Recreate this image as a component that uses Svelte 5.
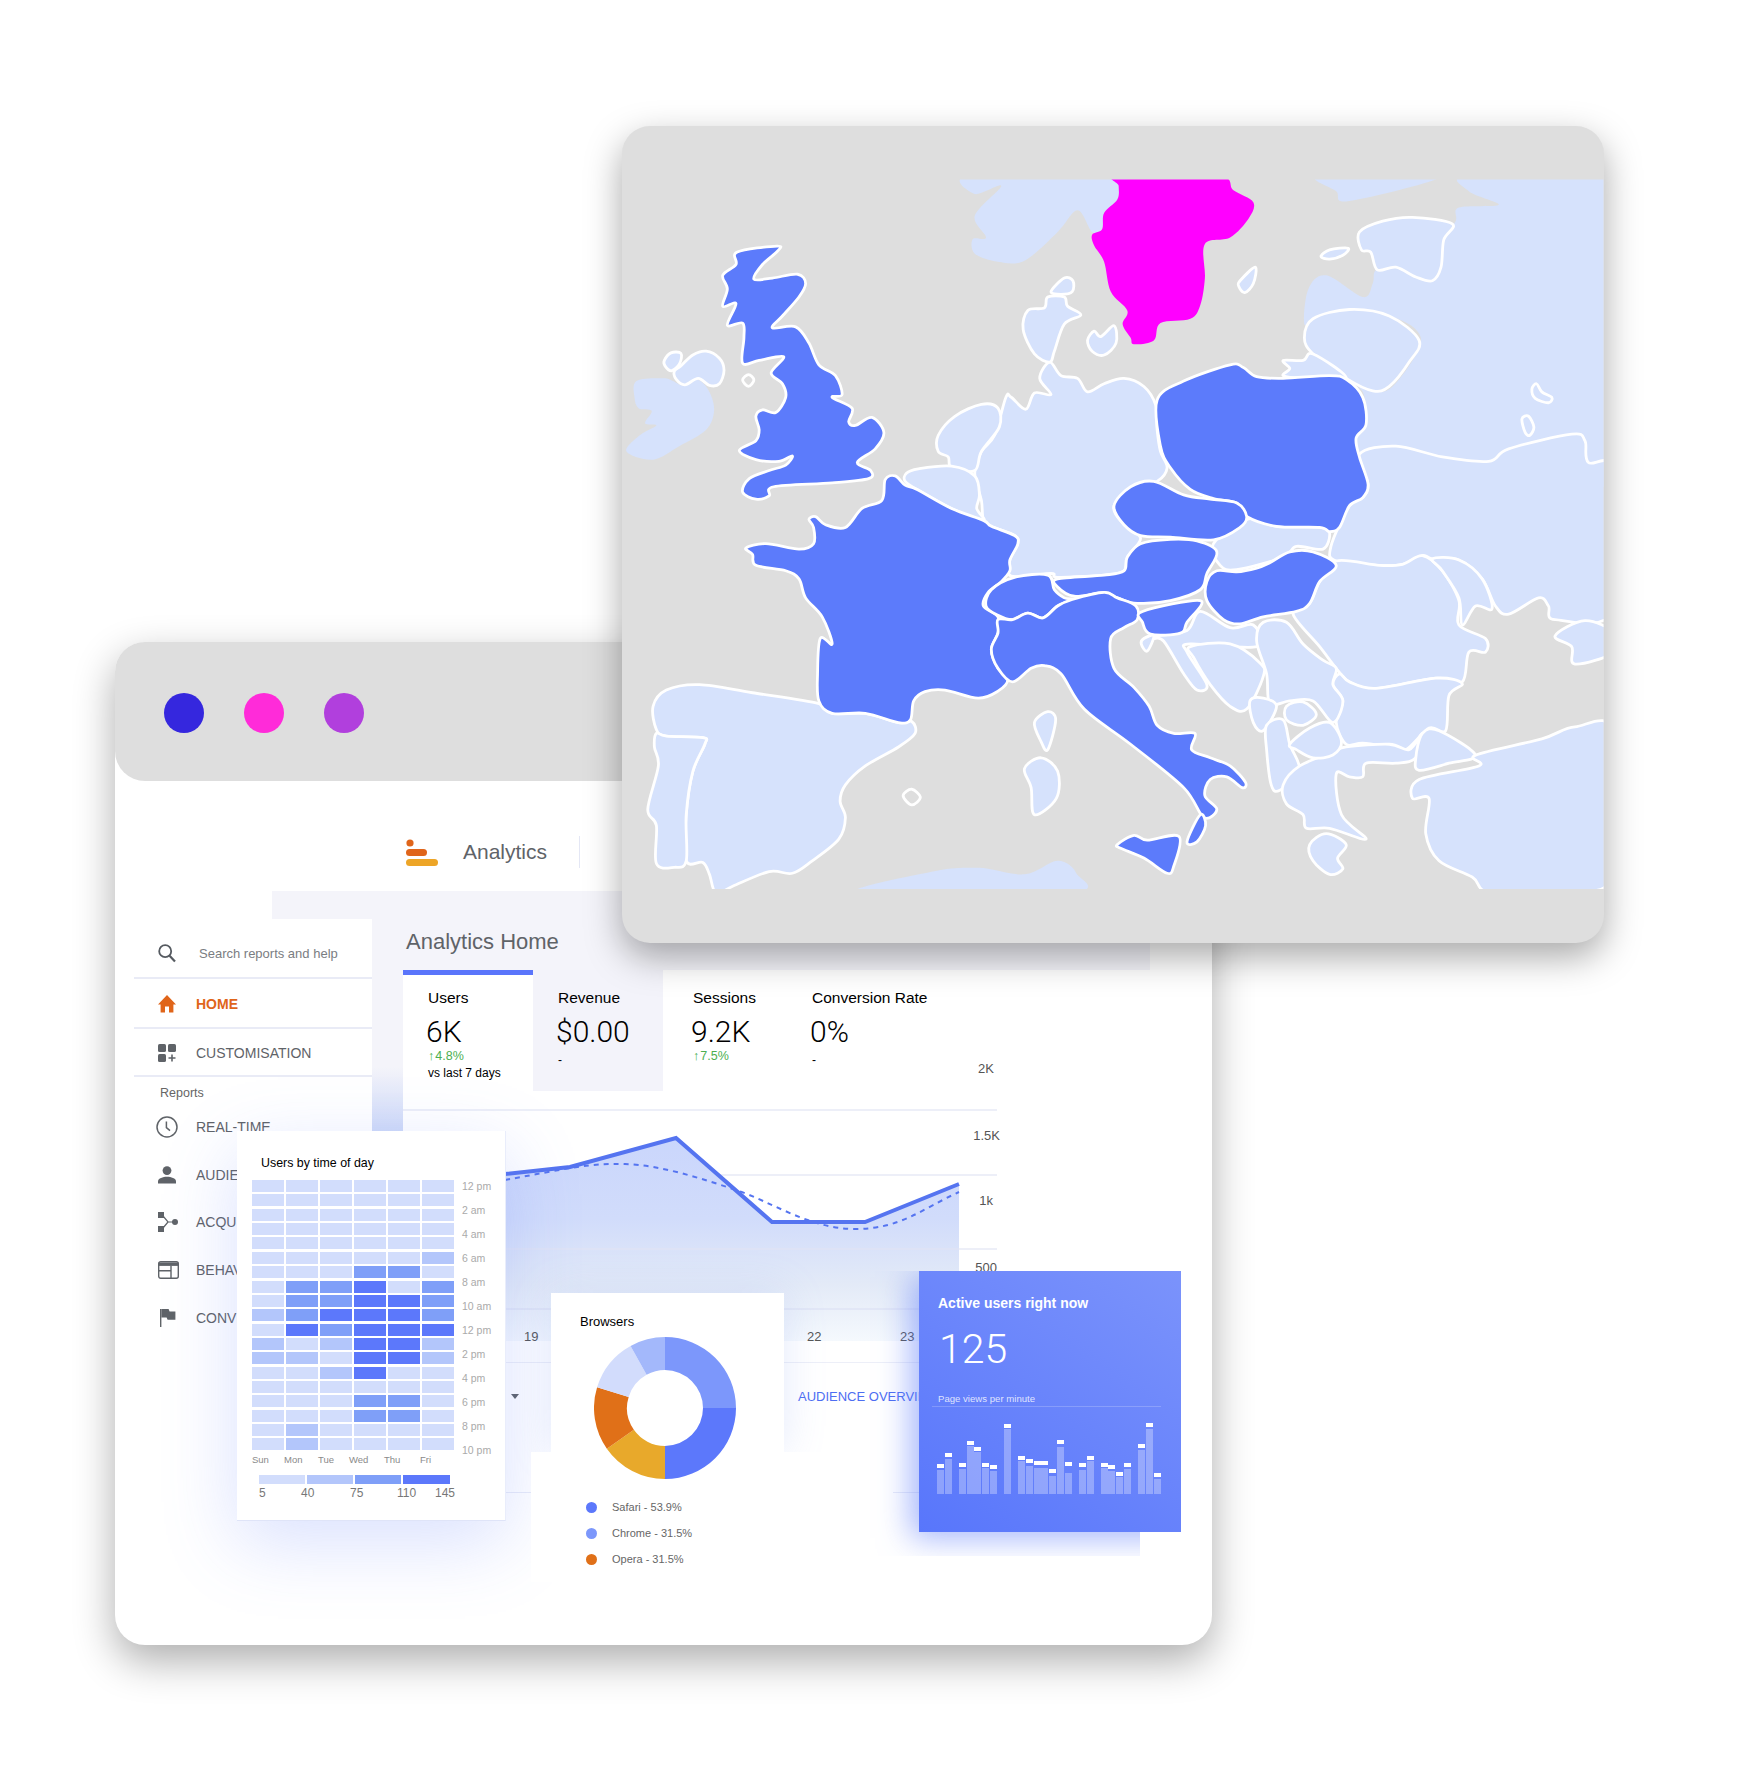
<script>
  // map traced on a 1568 square, squeezed to the 1040x850 box
  const LIGHT = "#d6e2fc";
  const BLUE = "#5c7bfb";

  const shapes = [
    // no outline
    { f: LIGHT, s: 0, p: [[55,500],[95,495],[110,500],[125,508],[148,498],[165,520],[172,555],[160,590],[120,620],[80,645],[40,630],[60,600],[85,582],[68,578],[78,555],[58,550],[52,530]] },
    { f: LIGHT, s: 0, p: [[558,120],[780,120],[782,140],[780,165],[760,190],[757,220],[742,225],[720,185],[690,225],[640,278],[600,280],[565,265],[562,238],[582,235],[565,195],[605,140],[565,155]] },
    { f: LIGHT, s: 0, p: [[1085,120],[1270,120],[1130,168],[1110,150]] },
    { f: LIGHT, s: 0, p: [[1310,120],[1530,120],[1530,660],[1490,650],[1485,610],[1465,598],[1370,625],[1340,648],[1270,640],[1200,620],[1145,635],[1140,600],[1155,570],[1150,520],[1125,495],[1165,518],[1195,510],[1235,440],[1230,405],[1190,380],[1130,368],[1080,380],[1062,395],[1068,330],[1095,305],[1150,345],[1165,320],[1170,295],[1200,290],[1230,308],[1255,315],[1268,290],[1272,240],[1290,205],[1295,180],[1355,175],[1310,150]] },
    { f: LIGHT, s: 0, p: [[390,1445],[500,1405],[570,1398],[640,1410],[690,1385],[718,1408],[708,1445]] },
    { f: "#ff00ff", s: 0, p: [[780,120],[930,120],[955,148],[985,170],[978,200],[950,235],[912,247],[912,310],[905,360],[890,385],[845,393],[835,425],[805,432],[800,420],[788,395],[795,370],[770,335],[760,280],[745,250],[742,230],[757,220],[760,190],[780,165],[782,140]] },
    // light countries
    { f: LIGHT, p: [[97,462],[107,448],[122,449],[120,468],[108,481],[98,472]] },
    { f: LIGHT, p: [[122,472],[140,452],[160,445],[180,458],[187,480],[180,505],[165,508],[148,495],[128,507],[115,497],[112,482]] },
    { f: "none", p: [[215,498],[224,488],[232,498],[224,510]] },
    { f: LIGHT, p: [[85,1143],[80,1100],[100,1070],[150,1060],[230,1075],[330,1095],[350,1113],[400,1113],[450,1130],[470,1128],[475,1150],[450,1175],[400,1210],[370,1245],[362,1275],[370,1305],[360,1345],[320,1385],[290,1408],[255,1405],[200,1432],[175,1445],[165,1410],[155,1388],[130,1385],[130,1300],[140,1220],[158,1170],[155,1158],[100,1155]] },
    { f: LIGHT, p: [[85,1150],[100,1155],[155,1158],[158,1170],[140,1220],[130,1300],[130,1385],[112,1397],[85,1390],[85,1320],[72,1290],[88,1210],[82,1175]] },
    { f: LIGHT, p: [[578,755],[575,720],[565,670],[575,630],[595,600],[612,530],[620,530],[642,552],[655,522],[680,525],[663,495],[678,465],[695,490],[720,495],[735,520],[760,505],[790,495],[820,510],[838,545],[840,590],[845,630],[855,660],[840,685],[810,695],[775,730],[790,765],[815,790],[795,825],[790,850],[760,858],[690,862],[680,855],[620,860],[618,830],[630,800],[625,785],[590,768]] },
    { f: LIGHT, p: [[678,465],[655,450],[638,405],[645,370],[670,365],[675,345],[700,345],[705,362],[725,378],[700,395],[685,445]] },
    { f: LIGHT, p: [[680,335],[700,310],[713,315],[712,335],[695,340]] },
    { f: LIGHT, p: [[525,640],[510,630],[510,600],[535,565],[575,543],[600,550],[602,585],[575,630],[565,665],[530,660]] },
    { f: LIGHT, p: [[462,670],[480,662],[530,657],[565,675],[572,710],[568,735],[578,757],[530,735],[478,700],[460,685]] },
    { f: LIGHT, p: [[965,315],[988,290],[985,320],[972,337],[963,325]] },
    { f: LIGHT, p: [[735,425],[745,408],[755,418],[775,398],[778,430],[760,452],[742,445]] },
    { f: LIGHT, p: [[1087,270],[1100,258],[1128,255],[1120,268],[1100,275]] },
    { f: LIGHT, p: [[1145,225],[1180,205],[1225,198],[1285,210],[1272,240],[1268,290],[1255,315],[1230,308],[1200,290],[1172,295],[1162,262],[1148,258]] },
    { f: LIGHT, p: [[1062,420],[1075,385],[1130,368],[1190,380],[1235,425],[1220,465],[1190,510],[1165,518],[1125,495],[1075,450]] },
    { f: LIGHT, p: [[1030,462],[1060,462],[1075,450],[1125,495],[1060,495],[1030,490],[1040,477]] },
    { f: LIGHT, p: [[1405,515],[1412,505],[1420,520],[1435,530],[1430,540],[1410,532]] },
    { f: LIGHT, p: [[1390,570],[1400,565],[1408,585],[1402,600],[1395,595]] },
    { f: LIGHT, p: [[1145,635],[1200,620],[1270,640],[1340,648],[1370,625],[1465,598],[1485,610],[1490,650],[1530,670],[1530,920],[1440,940],[1430,915],[1415,900],[1370,930],[1350,915],[1330,865],[1295,830],[1255,828],[1240,822],[1210,838],[1175,840],[1110,832],[1102,805],[1130,730],[1150,715],[1158,690]] },
    { f: LIGHT, p: [[925,800],[975,755],[1020,768],[1085,770],[1100,780],[1090,810],[1050,805],[1030,825],[960,848],[935,840]] },
    { f: LIGHT, p: [[1110,832],[1175,840],[1210,838],[1240,822],[1270,850],[1295,905],[1295,950],[1335,975],[1335,1000],[1310,1000],[1300,1055],[1260,1048],[1170,1067],[1130,1055],[1110,1030],[1085,990],[1045,930],[1070,910],[1085,870]] },
    { f: LIGHT, p: [[1255,828],[1295,830],[1330,865],[1345,920],[1320,915],[1300,950],[1295,900],[1270,850]] },
    { f: LIGHT, p: [[1115,1040],[1130,1055],[1170,1067],[1260,1048],[1300,1058],[1280,1080],[1275,1145],[1250,1140],[1215,1180],[1190,1175],[1150,1168],[1125,1170],[1110,1130],[1120,1090],[1105,1060]] },
    { f: LIGHT, p: [[835,975],[850,980],[880,1040],[900,1070],[915,1060],[885,1000],[890,985],[990,990],[985,950],[950,955],[905,925],[885,960],[840,970]] },
    { f: LIGHT, p: [[820,975],[835,970],[825,998],[816,985]] },
    { f: LIGHT, p: [[895,1010],[890,990],[950,985],[995,1020],[1000,1045],[975,1105],[950,1100],[920,1060]] },
    { f: LIGHT, p: [[1000,945],[1035,945],[1060,985],[1090,1015],[1110,1030],[1105,1060],[1120,1090],[1105,1130],[1075,1090],[1040,1090],[1010,1095],[1005,1040],[990,980]] },
    { f: LIGHT, p: [[980,1090],[1000,1085],[1020,1100],[1000,1145],[985,1130]] },
    { f: LIGHT, p: [[1035,1100],[1060,1092],[1080,1115],[1060,1135],[1035,1125]] },
    { f: LIGHT, p: [[1005,1135],[1030,1125],[1040,1170],[1055,1220],[1025,1255],[1012,1245],[1005,1180]] },
    { f: LIGHT, p: [[1055,1210],[1105,1185],[1125,1175],[1190,1170],[1220,1180],[1240,1150],[1230,1195],[1200,1205],[1155,1205],[1150,1230],[1130,1230],[1110,1225],[1118,1300],[1155,1345],[1100,1325],[1065,1325],[1060,1300],[1035,1280],[1030,1245]] },
    { f: LIGHT, p: [[1040,1170],[1070,1140],[1100,1130],[1118,1165],[1105,1190],[1075,1195],[1050,1180]] },
    { f: LIGHT, p: [[1070,1355],[1095,1335],[1125,1355],[1112,1380],[1120,1400],[1100,1410],[1075,1385]] },
    { f: LIGHT, p: [[1240,1150],[1265,1145],[1320,1190],[1280,1205],[1235,1218],[1230,1195]] },
    { f: LIGHT, p: [[1320,1190],[1420,1160],[1470,1138],[1530,1150],[1530,1400],[1470,1445],[1345,1445],[1315,1415],[1265,1385],[1245,1335],[1250,1270],[1225,1270],[1235,1235],[1325,1210]] },
    { f: LIGHT, p: [[1440,970],[1485,942],[1530,965],[1530,1000],[1470,1022],[1465,990]] },
    { f: LIGHT, p: [[655,1130],[675,1110],[687,1125],[675,1180],[665,1165]] },
    { f: LIGHT, p: [[640,1215],[665,1195],[690,1220],[688,1270],[655,1300],[650,1250]] },
    { f: "none", p: [[457,1265],[470,1253],[483,1268],[470,1282]] },
    // highlighted countries
    { f: BLUE, p: [[207,262],[267,251],[268,260],[245,285],[232,312],[260,310],[298,303],[310,320],[300,345],[275,380],[260,402],[295,400],[315,430],[330,470],[355,490],[365,525],[350,530],[380,550],[375,575],[385,582],[410,567],[428,595],[415,625],[388,650],[408,665],[405,680],[350,688],[262,695],[255,712],[235,718],[215,705],[225,680],[255,665],[280,655],[290,638],[270,648],[235,645],[210,628],[235,610],[240,590],[235,565],[245,553],[265,558],[280,530],[275,505],[258,485],[277,455],[240,462],[215,467],[217,420],[215,393],[192,397],[205,357],[185,362],[192,330],[185,305],[205,285]] },
    { f: BLUE, p: [[425,720],[430,682],[445,675],[460,692],[478,700],[530,735],[578,757],[590,768],[625,785],[630,800],[618,830],[618,850],[605,870],[585,890],[578,915],[600,935],[600,965],[590,995],[600,1030],[615,1050],[600,1072],[570,1085],[520,1070],[490,1073],[473,1090],[468,1125],[450,1130],[400,1113],[350,1113],[330,1090],[328,1040],[332,975],[350,985],[335,935],[310,900],[300,865],[280,850],[235,840],[230,820],[220,808],[250,800],[300,810],[322,800],[322,770],[315,755],[325,750],[340,765],[370,770],[395,735]] },
    { f: BLUE, p: [[840,535],[880,500],[950,470],[970,475],[990,492],[1030,495],[1100,490],[1125,497],[1150,530],[1155,580],[1140,605],[1145,640],[1158,690],[1150,715],[1130,730],[1115,770],[1100,778],[1085,770],[1020,768],[975,750],[960,725],[925,717],[890,700],[860,660],[845,620]] },
    { f: BLUE, p: [[775,730],[800,695],[835,685],[880,710],[920,718],[960,725],[975,750],[965,770],[925,793],[860,788],[815,785],[790,765]] },
    { f: BLUE, p: [[690,865],[760,858],[790,850],[795,825],[815,800],[860,792],[900,795],[930,815],[915,855],[905,885],[860,905],[810,910],[780,900],[760,890],[715,897],[690,880]] },
    { f: BLUE, p: [[582,915],[590,885],[625,862],[675,858],[685,885],[700,900],[712,903],[690,915],[668,937],[645,928],[622,940],[600,932]] },
    { f: BLUE, p: [[600,940],[622,940],[645,928],[668,937],[690,915],[712,903],[760,890],[780,900],[808,915],[810,940],[790,955],[770,975],[775,1030],[805,1065],[828,1100],[840,1135],[865,1150],[897,1150],[892,1180],[920,1195],[950,1210],[973,1240],[968,1250],[945,1230],[920,1235],[912,1265],[930,1290],[910,1305],[880,1250],[800,1170],[730,1105],[695,1040],[670,1025],[650,1030],[622,1055],[600,1030],[590,995],[600,965]] },
    { f: BLUE, p: [[780,1355],[805,1338],[825,1347],[873,1340],[865,1395],[855,1408],[820,1380],[785,1362]] },
    { f: BLUE, p: [[905,1300],[913,1320],[900,1350],[885,1350]] },
    { f: BLUE, p: [[915,870],[930,850],[960,852],[990,845],[1010,835],[1040,815],[1075,815],[1110,840],[1085,870],[1070,910],[1050,925],[1000,935],[965,948],[940,940],[915,905]] },
    { f: BLUE, p: [[818,925],[905,905],[885,945],[875,965],[830,967],[818,945]] },
  ];

  // closed catmull-rom through the traced points
  function smooth(p) {
    const n = p.length;
    let d = `M${p[0][0]} ${p[0][1]}`;
    for (let i = 0; i < n; i++) {
      const a = p[(i - 1 + n) % n], b = p[i], c = p[(i + 1) % n], e = p[(i + 2) % n];
      const c1x = b[0] + (c[0] - a[0]) / 6, c1y = b[1] + (c[1] - a[1]) / 6;
      const c2x = c[0] - (e[0] - b[0]) / 6, c2y = c[1] - (e[1] - b[1]) / 6;
      d += `C${c1x.toFixed(1)} ${c1y.toFixed(1)} ${c2x.toFixed(1)} ${c2y.toFixed(1)} ${c[0]} ${c[1]}`;
    }
    return d + "Z";
  }

  const tabs = [
    { label: "Users", value: "6K", delta: "4.8%", note: "vs last 7 days", cls: "active" },
    { label: "Revenue", value: "$0.00", dash: true, cls: "shaded" },
    { label: "Sessions", value: "9.2K", delta: "7.5%", cls: "plain" },
    { label: "Conversion Rate", value: "0%", dash: true, cls: "plain" },
  ];

  const heat = [
    "000000", "000000", "000000", "000000", "000000",
    "000001", "000220", "022302", "022332", "123332",
    "032333", "101331", "110331", "001300", "000000",
    "000220", "000220", "010000", "010000",
  ];
  const hours = ["12 pm", "2 am", "4 am", "6 am", "8 am", "10 am", "12 pm", "2 pm", "4 pm", "6 pm", "8 pm", "10 pm"];
  const days = ["Sun", "Mon", "Tue", "Wed", "Thu", "Fri"];
  const scale = ["5", "40", "75", "110", "145"];

  const segments = [
    { from: 0, to: 90, color: "#7c97fb" },
    { from: 90, to: 180, color: "#5c78fb" },
    { from: 180, to: 235, color: "#e8a92b" },
    { from: 235, to: 287, color: "#e07018" },
    { from: 287, to: 331, color: "#d2dcfc" },
    { from: 331, to: 360, color: "#a3b8fb" },
  ];

  function slice(from, to) {
    const pt = (deg, r) => {
      const a = (deg * Math.PI) / 180;
      return `${(71 + r * Math.sin(a)).toFixed(2)} ${(71 - r * Math.cos(a)).toFixed(2)}`;
    };
    const big = to - from > 180 ? 1 : 0;
    return `M${pt(from, 71)}A71 71 0 ${big} 1 ${pt(to, 71)}L${pt(to, 38)}A38 38 0 ${big} 0 ${pt(from, 38)}Z`;
  }

  const browsers = [
    { name: "Safari - 53.9%", color: "#5c78fb" },
    { name: "Chrome - 31.5%", color: "#7c97fb" },
    { name: "Opera - 31.5%", color: "#e07018" },
  ];

  // cap top / bar top as read off the card, grouped by the wider gaps
  const barGroups = [
    [[41, 47], [30, 36]],
    [[40, 46], [18, 23], [24, 29], [40, 45], [42, 48]],
    [[1, 6]],
    [[33, 38], [36, 43], [38, 45], [38, 45], [46, 53], [17, 24], [39, 50]],
    [[40, 47], [33, 38]],
    [[40, 45], [42, 48], [49, 54], [40, 46]],
    [[21, 27], [0, 6], [50, 56]],
  ];
  const barBase = 71;
</script>

<div class="stage">
  <section class="window">
    <header class="titlebar">
      <span class="dot dot-blue"></span>
      <span class="dot dot-pink"></span>
      <span class="dot dot-purple"></span>
    </header>

    <div class="brand">
      <svg class="brand-logo" width="33" height="28" viewBox="0 0 33 28">
        <circle cx="4" cy="4" r="3.6" fill="#e0651a" />
        <rect x="0" y="10" width="21" height="7" rx="3.5" fill="#e0651a" />
        <rect x="0" y="20" width="32" height="7" rx="3.5" fill="#eda527" />
      </svg>
      <span class="brand-name">Analytics</span>
      <span class="brand-rule"></span>
    </div>

    <div class="band"></div>
    <div class="strip"></div>

    <div class="dash">
      <aside class="sidebar">
        <div class="side-row search">
          <span class="side-icon wide">
            <svg width="18" height="19" viewBox="0 0 18 19" fill="none" stroke="#555a60" stroke-width="1.8"><circle cx="7.2" cy="7.2" r="6" /><path d="M11.6 11.8 17 17.6" stroke-width="2.2" /></svg>
          </span>
          <span>Search reports and help</span>
        </div>
        <div class="side-row home">
          <span class="side-icon">
            <svg width="18" height="18" viewBox="0 0 18 18" fill="#e0651a"><path d="M9 0 18 9.4H15.4V17.6H11V11.4H7V17.6H2.6V9.4H0Z" /></svg>
          </span>
          <span>HOME</span>
        </div>
        <div class="side-row custom">
          <span class="side-icon">
            <svg width="18" height="18" viewBox="0 0 18 18" fill="#5f6368"><rect width="8" height="8" rx="1.6" /><rect x="10" width="8" height="8" rx="1.6" /><rect y="10" width="8" height="8" rx="1.6" /><path d="M13.2 10.5h1.6v2.7h2.7v1.6h-2.7v2.7h-1.6v-2.7h-2.7v-1.6h2.7z" /></svg>
          </span>
          <span>CUSTOMISATION</span>
        </div>
        <div class="reports">Reports</div>
        <div class="nav-row">
          <span class="side-icon clock">
            <svg width="22" height="22" viewBox="0 0 22 22" fill="none" stroke="#5f6368" stroke-width="1.5"><circle cx="11" cy="11" r="10" /><path d="M10.4 5.4V11.6L14 14.6" /></svg>
          </span>
          <span>REAL-TIME</span>
        </div>
        <div class="nav-row">
          <span class="side-icon">
            <svg width="18" height="18" viewBox="0 0 18 18" fill="#5f6368"><circle cx="9" cy="4.6" r="4.4" /><path d="M0 17.6V15.4C0 12.4 5 10.8 9 10.8S18 12.4 18 15.4V17.6Z" /></svg>
          </span>
          <span>AUDIENCE</span>
        </div>
        <div class="nav-row">
          <span class="side-icon">
            <svg width="20" height="20" viewBox="0 0 20 20" fill="#5f6368"><rect width="6" height="6" /><rect y="14" width="6" height="6" /><circle cx="17" cy="10" r="3" /><path d="M5 4 10 10H15M10 10 5 16" fill="none" stroke="#5f6368" stroke-width="1.2" /></svg>
          </span>
          <span>ACQUISITION</span>
        </div>
        <div class="nav-row">
          <span class="side-icon">
            <svg width="21" height="18" viewBox="0 0 21 18" fill="none" stroke="#5f6368" stroke-width="1.4"><rect x=".7" y=".7" width="19.6" height="16.6" rx="2" /><path d="M.7 3.2H20.3" stroke-width="3.4" /><path d="M.7 9.8H13M13 4.8V17.3" /></svg>
          </span>
          <span>BEHAVIOUR</span>
        </div>
        <div class="nav-row">
          <span class="side-icon flag">
            <svg width="16" height="18" viewBox="0 0 16 18" fill="#5f6368"><rect width="1.4" height="18" /><path d="M1.4 0H8.6L9.6 2.4H15.4V10.8H7.6L6.6 8.6H1.4Z" /></svg>
          </span>
          <span>CONVERSIONS</span>
        </div>
      </aside>

      <main class="content">
        <h1 class="page-title">Analytics Home</h1>

        <div class="tabs">
          {#each tabs as tab}
            <div class="tab {tab.cls}">
              <div class="tab-label">{tab.label}</div>
              <div class="tab-value">{tab.value}</div>
              {#if tab.delta}
                <div class="tab-delta"><span class="arrow">↑</span>{tab.delta}</div>
              {/if}
              {#if tab.note}
                <div class="tab-note">{tab.note}</div>
              {/if}
              {#if tab.dash}
                <div class="tab-dash">-</div>
              {/if}
            </div>
          {/each}
        </div>

        <svg class="chart" width="840" height="313" viewBox="372 1050 840 313">
          <defs>
            <linearGradient id="area" x1="0" y1="1138" x2="0" y2="1341" gradientUnits="userSpaceOnUse">
              <stop offset="0" stop-color="#cad6fc" />
              <stop offset="0.4" stop-color="#d1dcfb" />
              <stop offset="0.72" stop-color="#e3eaf7" />
              <stop offset="1" stop-color="#f5f9fd" />
            </linearGradient>
          </defs>
          <path d="M403 1110H997M403 1175H997M403 1249H997M403 1309H997M403 1363H1000" stroke="#e8eaf6" stroke-width="1.5" fill="none" />
          <path d="M505 1174 570 1167 676 1138 772 1222H865L959 1184V1341H505Z" fill="url(#area)" />
          <path d="M505 1249H959M505 1309H959" stroke="#dfe4f5" stroke-width="1.5" fill="none" />
          <path d="M505 1180C570 1168 590 1163 625 1164S700 1178 736 1190 810 1229 855 1229 920 1210 959 1192" fill="none" stroke="#5574f0" stroke-width="2" stroke-dasharray="5 5" />
          <path d="M505 1174 570 1167 676 1138 772 1222H865L959 1184" fill="none" stroke="#5574f0" stroke-width="4" />
          <g class="y-labels" text-anchor="end">
            <text x="994" y="1073">2K</text>
            <text x="1000" y="1140">1.5K</text>
            <text x="993" y="1205">1k</text>
            <text x="997" y="1272">500</text>
          </g>
          <g class="x-labels">
            <text x="524" y="1341">19</text>
            <text x="807" y="1341">22</text>
            <text x="900" y="1341">23</text>
          </g>
        </svg>

        <div class="chart-foot">
          <span class="caret"></span>
          <span class="overview">AUDIENCE OVERVIEW</span>
        </div>
      </main>
    </div>

    <!-- cards floating over the dashboard -->
    <div class="heat-card">
      <div class="card-title">Users by time of day</div>
      <div class="heat-body">
        <div class="heat-grid">
          {#each heat as row}
            {#each row.split("") as level}
              <span class="cell lv{level}"></span>
            {/each}
          {/each}
        </div>
        <div class="hours">
          {#each hours as hour}
            <span>{hour}</span>
          {/each}
        </div>
      </div>
      <div class="days">
        {#each days as day}
          <span>{day}</span>
        {/each}
      </div>
      <div class="legend-bars">
        <span class="lv0"></span><span class="lv1"></span><span class="lv2"></span><span class="lv3"></span>
      </div>
      <div class="legend-nums">
        {#each scale as n}
          <span>{n}</span>
        {/each}
      </div>
    </div>

    <div class="browsers">
      <div class="browsers-shadow"></div>
      <div class="browsers-cover"></div>
      <div class="browsers-title">Browsers</div>
      <svg class="donut" width="142" height="142" viewBox="0 0 142 142">
        {#each segments as seg}
          <path d={slice(seg.from, seg.to)} fill={seg.color} />
        {/each}
      </svg>
      <ul class="browser-list">
        {#each browsers as b}
          <li><span class="swatch" style="background:{b.color}"></span>{b.name}</li>
        {/each}
      </ul>
    </div>

    <div class="active-glow"></div>
    <div class="active-card">
      <div class="active-title">Active users right now</div>
      <div class="active-count">125</div>
      <div class="active-sub">Page views per minute</div>
      <div class="bars">
        {#each barGroups as group}
          <div class="bar-group">
            {#each group as [cap, top]}
              <div class="bar">
                <span class="bar-cap"></span>
                <span class="bar-fill" style="height:{barBase - top}px;margin-top:{top - cap - 3.5}px"></span>
              </div>
            {/each}
          </div>
        {/each}
      </div>
    </div>
  </section>

  <section class="map-card">
    <svg class="map" width="1040" height="850" viewBox="0 0 1568 1568" preserveAspectRatio="none">
      <defs>
        <clipPath id="map-clip"><rect x="0" y="128" width="1513" height="1309" /></clipPath>
      </defs>
      <g clip-path="url(#map-clip)">
        {#each shapes as shape}
          <path
            d={smooth(shape.p)}
            fill={shape.f}
            stroke={shape.s === 0 ? "none" : "#fff"}
            stroke-width="2.8"
            stroke-linejoin="round"
            vector-effect="non-scaling-stroke"
          />
        {/each}
      </g>
    </svg>
  </section>
</div>

<style>
  :global(body) {
    margin: 0;
    background: #fff;
  }

  .stage {
    position: relative;
    width: 1754px;
    height: 1774px;
    overflow: hidden;
    background: #fff;
    font-family: "Liberation Sans", Arial, sans-serif;
    color: #000;
  }

  /* ── Back window ── */

  .window {
    position: absolute;
    left: 115px;
    top: 642px;
    width: 1097px;
    height: 1003px;
    background: #fff;
    border-radius: 30px;
    box-shadow: 0 16px 42px rgba(0, 0, 0, 0.32);
  }

  .titlebar {
    display: flex;
    align-items: center;
    gap: 40px;
    height: 139px;
    padding: 2px 0 0 49px;
    box-sizing: border-box;
    background: #dedede;
    border-radius: 30px;
  }

  .dot {
    width: 40px;
    height: 40px;
    border-radius: 50%;
  }

  .dot-blue { background: #3527de; }
  .dot-pink { background: #ff2bd9; }
  .dot-purple { background: #b13fdd; }

  .brand {
    display: flex;
    align-items: center;
    height: 110px;
    padding: 32px 0 0 291px;
    box-sizing: border-box;
  }

  .brand-logo {
    margin-top: 2px;
  }

  .brand-name {
    margin-left: 24px;
    font-size: 21px;
    color: #5f6368;
  }

  .brand-rule {
    width: 1px;
    height: 32px;
    margin-left: 32px;
    background: #e4e7f5;
  }

  .band {
    position: absolute;
    left: 157px;
    top: 249px;
    width: 878px;
    height: 79px;
    background: #f4f4fa;
  }

  .strip {
    position: absolute;
    left: 257px;
    top: 328px;
    width: 31px;
    height: 161px;
    background: linear-gradient(#f4f4fa 60%, #cfdaf8);
  }

  .dash {
    position: relative;
    display: flex;
    align-items: flex-start;
    padding-left: 19px;
  }

  /* ── Sidebar ── */

  .sidebar {
    width: 238px;
    margin-top: 28px;
    font-size: 14px;
    color: #5f6368;
    background: #fff;
  }

  .side-row {
    display: flex;
    align-items: center;
    padding-left: 24px;
    box-sizing: border-box;
    border-bottom: 2px solid #e9ebf6;
  }

  .search {
    height: 60px;
    padding-top: 10px;
    font-size: 13px;
    color: #7a7d82;
  }

  .home {
    height: 50px;
    padding-top: 2px;
    font-weight: 700;
    color: #e0651a;
  }

  .custom {
    height: 48px;
    padding-top: 2px;
  }

  .side-icon {
    display: flex;
    align-items: center;
    width: 38px;
    flex: none;
  }

  .side-icon.wide {
    width: 41px;
  }

  .side-icon.clock {
    margin-left: -2px;
    width: 40px;
  }

  .side-icon.flag {
    margin-left: 2px;
    width: 36px;
  }

  .reports {
    padding: 9px 0 3px 26px;
    font-size: 12.5px;
    line-height: 14px;
    color: #666;
  }

  .nav-row {
    display: flex;
    align-items: center;
    height: 47.8px;
    padding-left: 24px;
  }

  /* ── Content column ── */

  .content {
    width: 840px;
  }

  .page-title {
    height: 79px;
    margin: 0;
    padding: 37px 0 0 34px;
    box-sizing: border-box;
    font-size: 22px;
    line-height: 28px;
    font-weight: 400;
    color: #5f6368;
    white-space: nowrap;
  }

  .tabs {
    display: flex;
    position: relative;
    height: 121px;
    padding-left: 31px;
  }

  .tab {
    width: 130px;
    padding: 19px 0 0 25px;
    box-sizing: border-box;
  }

  .tab.active {
    padding-top: 14px;
    border-top: 5px solid #5a75fb;
    background: #fff;
  }

  .tab.shaded {
    background: #f3f3fa;
  }

  .tab.plain {
    width: 119px;
    padding-left: 30px;
  }

  .tab-label {
    font-size: 15.5px;
    line-height: 18px;
    white-space: nowrap;
  }

  .tab-value {
    margin: 8px 0 0 -2px;
    font-family: Roboto, "Liberation Sans", sans-serif;
    font-weight: 300;
    font-size: 30px;
    line-height: 34px;
    white-space: nowrap;
  }

  .tab-delta {
    font-size: 12.5px;
    line-height: 14px;
    color: #4caf50;
  }

  .arrow {
    margin-right: 1px;
    font-weight: 700;
  }

  .tab-note {
    margin-top: 3px;
    font-size: 12px;
    line-height: 14px;
  }

  .tab-dash {
    margin-top: 4px;
    font-size: 12px;
    line-height: 14px;
  }

  .chart {
    display: block;
    margin-top: -41px;
    position: relative;
  }

  .y-labels text,
  .x-labels text {
    font-size: 13px;
    fill: #555;
  }

  .chart-foot {
    display: flex;
    align-items: center;
    width: 414px;
    height: 130px;
    margin-left: 133px;
    padding: 0 0 62px 6px;
    box-sizing: border-box;
    border-bottom: 1.5px solid #e8ebf8;
  }

  .caret {
    width: 0;
    height: 0;
    border-left: 4.5px solid transparent;
    border-right: 4.5px solid transparent;
    border-top: 5px solid #5f6368;
  }

  .overview {
    margin-left: 279px;
    font-size: 13px;
    color: #4e6ef2;
    white-space: nowrap;
  }

  /* ── Heatmap card ── */

  .heat-card {
    position: absolute;
    left: 122px;
    top: 489px;
    width: 269px;
    height: 390px;
    padding: 23px 0 0 15px;
    box-sizing: border-box;
    background: #fff;
    border-bottom: 1px solid #dfe4f8;
    border-right: 1px solid #e9edfb;
    box-shadow: 0 22px 70px rgba(100, 130, 250, 0.24);
  }

  .card-title {
    padding-left: 9px;
    font-size: 12.4px;
    line-height: 18px;
    white-space: nowrap;
  }

  .heat-body {
    display: flex;
    height: 271px;
    margin-top: 8px;
  }

  .heat-grid {
    display: grid;
    grid-template-columns: repeat(6, 32px);
    grid-auto-rows: 12px;
    gap: 2.37px 2px;
  }

  .cell { display: block; }

  .lv0 { background: #d2ddfc; }
  .lv1 { background: #b3c6fb; }
  .lv2 { background: #7f9ff8; }
  .lv3 { background: #5c78fb; }

  .hours {
    display: flex;
    flex-direction: column;
    margin: -6px 0 0 8px;
    font-size: 10.5px;
    line-height: 24px;
    color: #aaa;
    white-space: nowrap;
  }

  .days {
    display: grid;
    grid-template-columns: 32px 34px 31px 35px 36px auto;
    margin-top: 3px;
    font-size: 9.5px;
    line-height: 12px;
    color: #8a8a8a;
  }

  .legend-bars {
    display: grid;
    grid-template-columns: 46px 46px 46px 47px;
    gap: 2px;
    height: 9px;
    margin: 9px 0 0 7px;
    width: 192px;
  }

  .legend-nums {
    display: grid;
    grid-template-columns: 42px 49px 47px 38px auto;
    margin: 2px 0 0 7px;
    font-size: 12px;
    line-height: 14px;
    color: #777;
  }

  /* ── Browsers card ── */

  .browsers {
    position: absolute;
    left: 436px;
    top: 651px;
    width: 233px;
  }

  .browsers-shadow {
    position: absolute;
    inset: 0 0 auto 0;
    height: 159px;
    background: #fff;
    box-shadow: 0 0 40px rgba(120, 150, 240, 0.2);
  }

  .browsers-cover {
    position: absolute;
    left: -20px;
    top: 159px;
    width: 362px;
    height: 130px;
    background: #fff;
  }

  .browsers-title {
    position: relative;
    padding: 20px 0 0 29px;
    font-size: 13px;
    line-height: 18px;
  }

  .donut {
    position: relative;
    display: block;
    margin: 6px 0 0 43px;
  }

  .browser-list {
    position: relative;
    margin: 15px 0 0;
    padding: 0 0 0 35px;
    list-style: none;
    font-size: 11px;
    color: #666;
  }

  .browser-list li {
    display: flex;
    align-items: center;
    height: 26px;
    white-space: nowrap;
  }

  .swatch {
    width: 11px;
    height: 11px;
    margin-right: 15px;
    border-radius: 50%;
    flex: none;
  }

  /* ── Active users card ── */

  .active-glow {
    position: absolute;
    left: 755px;
    top: 629px;
    width: 270px;
    height: 285px;
    overflow: hidden;
  }

  .active-glow::before {
    content: "";
    position: absolute;
    left: 49px;
    top: 0;
    width: 270px;
    height: 261px;
    box-shadow: -8px 6px 30px rgba(90, 120, 250, 0.55);
  }

  .active-card {
    position: absolute;
    left: 804px;
    top: 629px;
    width: 262px;
    height: 261px;
    padding: 23px 0 0 19px;
    box-sizing: border-box;
    color: #fff;
    background: linear-gradient(35deg, #5876fb, #7b93fb);
  }

  .active-title {
    font-size: 14px;
    font-weight: 700;
    line-height: 18px;
    white-space: nowrap;
  }

  .active-count {
    margin: 9px 0 0 1px;
    font-family: Roboto, "Liberation Sans", sans-serif;
    font-weight: 300;
    font-size: 41px;
    line-height: 56px;
  }

  .active-sub {
    width: 229px;
    margin: 15px 0 0 -6px;
    padding: 0 0 1px 6px;
    box-sizing: border-box;
    border-bottom: 1px solid rgba(255, 255, 255, 0.2);
    font-size: 9.6px;
    line-height: 13px;
    color: rgba(255, 255, 255, 0.8);
  }

  .bars {
    display: flex;
    align-items: flex-end;
    gap: 7px;
    width: 234px;
    height: 71px;
    margin: 16px 0 0 -1px;
  }

  .bar-group {
    display: flex;
    align-items: flex-end;
    gap: 0.8px;
  }

  .bar {
    display: flex;
    flex-direction: column;
    width: 7px;
  }

  .bar-cap {
    height: 3.5px;
    background: #fff;
  }

  .bar-fill {
    display: block;
    background: rgba(255, 255, 255, 0.3);
  }

  /* ── Map window ── */

  .map-card {
    position: absolute;
    left: 622px;
    top: 126px;
    width: 982px;
    height: 817px;
    background: #dedede;
    border-radius: 28px;
    box-shadow: 0 14px 36px rgba(0, 0, 0, 0.34);
    overflow: hidden;
  }

  .map {
    position: absolute;
    left: -22px;
    top: -16px;
  }
</style>
